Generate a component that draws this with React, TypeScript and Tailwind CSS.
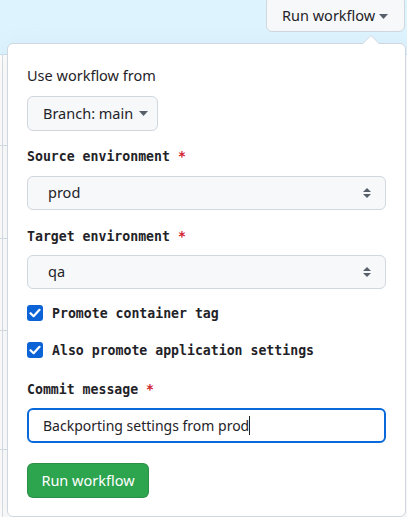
import React from "react";

const sans = { fontFamily: '"Noto Sans", "Open Sans", sans-serif' };
const mono = { fontFamily: '"DejaVu Sans Mono", "Liberation Mono", monospace' };

const Caret = () => (
    <svg width="9" height="5" viewBox="0 0 9 5" className="shrink-0">
        <path d="M0 0h9L4.5 5z" fill="#57606a" />
    </svg>
);

const UpDown = () => (
    <svg width="8" height="10" viewBox="0 0 8 10">
        <path d="M4 0L8 4H0z" fill="#57606a" />
        <path d="M0 6h8L4 10z" fill="#57606a" />
    </svg>
);

const Check = () => (
    <div className="w-4 h-4 rounded-[3px] bg-[#0b63d6] grid place-items-center shrink-0">
        <svg width="12" height="10" viewBox="0 0 12 10">
            <path d="M1.5 5.2L4.6 8.2L10.5 1.8" stroke="#fff" strokeWidth="2.2" fill="none" strokeLinecap="round" strokeLinejoin="round" />
        </svg>
    </div>
);

const Label = ({ text, className }: { text: string; className: string }) => (
    <div className={`h-5 leading-5 text-[13.2px] font-bold text-[#1f2328] ${className}`} style={mono}>
        {text} <span className="text-[#cf222e]">*</span>
    </div>
);

const Select = ({ value, className }: { value: string; className: string }) => (
    <div className={`h-[34px] rounded-md border border-[#d0d7de] bg-[#f6f8fa] flex items-center justify-between pl-5 pr-[14px] ${className}`}>
        <span className="text-[14.5px] text-[#1f2328]">{value}</span>
        <UpDown />
    </div>
);

export default function App() {
    return (
        <div className="relative w-[407px] h-[517px] bg-white overflow-hidden" style={sans}>
            {/* page behind the menu */}
            <div className="h-[55px] bg-[#ddf4ff] border-b border-[#c8dff0] flex justify-end">
                <button className="mt-[-4px] mr-[2px] h-[36px] w-[139px] rounded-md border border-[#d0d7de] bg-[#f6f8fa] flex items-center pl-[15px] pr-[16px] text-[14.5px] text-[#1f2328] whitespace-nowrap">
                    <span className="pt-[4px]">Run workflow</span>
                    <span className="pt-[4px] ml-auto">
                        <Caret />
                    </span>
                </button>
            </div>
            <div className="flex h-full">
                <div className="w-[3px] border-r border-[#d8dee4]" />
            </div>
            <div className="absolute left-0 top-[145px] w-[7px] border-t border-[#d8dee4]" />
            <div className="absolute left-0 top-[238px] w-[7px] border-t border-[#d8dee4]" />
            <div className="absolute left-0 top-[330px] w-[7px] border-t border-[#d8dee4]" />
            <div className="absolute left-0 top-[449px] w-[7px] border-t border-[#d8dee4]" />

            {/* dropdown menu */}
            <div className="absolute left-[7px] top-[43px] w-[399px] h-[474px] bg-white border border-[#d0d7de] rounded-md shadow-[0_8px_24px_rgba(140,149,159,0.2)] px-[19px] pt-[21px]">
                <div className="absolute -top-[9px] left-[354px] w-0 h-0 border-x-[9px] border-x-transparent border-b-[9px] border-b-[#d0d7de]" />
                <div className="absolute -top-[8px] left-[355px] w-0 h-0 border-x-[8px] border-x-transparent border-b-[8px] border-b-white" />

                <div className="h-5 leading-5 text-[14.5px] text-[#1f2328]">Use workflow from</div>
                <button className="mt-[11px] h-[35px] w-[131px] rounded-md border border-[#d0d7de] bg-[#f6f8fa] flex items-center pl-[15px] gap-[6px] text-[14.5px] text-[#1f2328] whitespace-nowrap">
                    Branch: main
                    <Caret />
                </button>

                <Label text="Source environment" className="mt-[16px]" />
                <Select value="prod" className="mt-[9px]" />

                <Label text="Target environment" className="mt-[17px]" />
                <Select value="qa" className="mt-[8px]" />

                <div className="mt-[14px] h-5 flex items-center gap-[9px]">
                    <Check />
                    <span className="text-[13.2px] font-bold text-[#1f2328] pt-[2px]" style={mono}>Promote container tag</span>
                </div>
                <div className="mt-[17px] h-5 flex items-center gap-[9px]">
                    <Check />
                    <span className="text-[13.2px] font-bold text-[#1f2328] pt-[2px]" style={mono}>Also promote application settings</span>
                </div>

                <Label text="Commit message" className="mt-[20px]" />
                <div className="mt-[8px] h-[35px] rounded-md border-2 border-[#0969da] flex items-center pl-[14px] text-[14px] text-[#1f2328] whitespace-nowrap">
                    Backporting settings from prod
                    <span className="w-px h-[19px] bg-[#1f2328]" />
                </div>

                <button className="mt-[20px] h-[35px] w-[122px] rounded-md bg-[#2da44e] border border-[rgba(27,31,36,0.15)] text-[14.5px] text-white flex items-center justify-center whitespace-nowrap">
                    Run workflow
                </button>
            </div>
        </div>
    );
}
